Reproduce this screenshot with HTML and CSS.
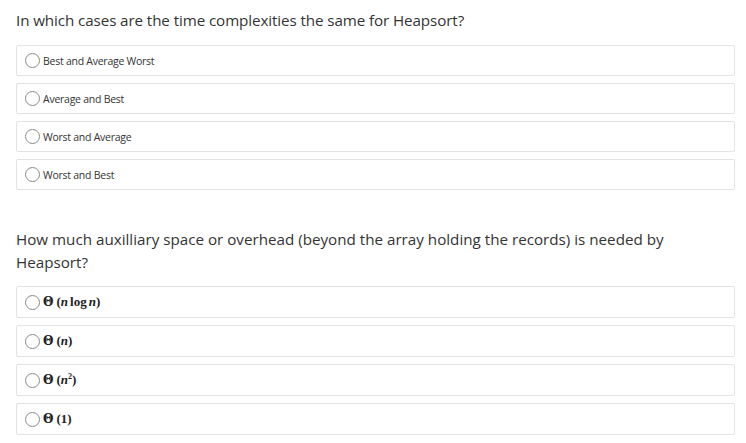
FILE: index.html
```html
<!DOCTYPE html>
<html>
<head>
<meta charset="utf-8">
<link rel="stylesheet" href="styles.css">
</head>
<body>
<div class="page">
  <section class="question q1">
    <p class="prompt">In which cases are the time complexities the same for Heapsort?</p>
    <div class="options">
      <label class="option"><span class="radio"></span><span class="label">Best and Average Worst</span></label>
      <label class="option"><span class="radio"></span><span class="label">Average and Best</span></label>
      <label class="option"><span class="radio"></span><span class="label">Worst and Average</span></label>
      <label class="option"><span class="radio"></span><span class="label">Worst and Best</span></label>
    </div>
  </section>
  <section class="question q2">
    <p class="prompt">How much auxilliary space or overhead (beyond the array holding the records) is needed by Heapsort?</p>
    <div class="options">
      <label class="option"><span class="radio"></span><span class="math"><b>Θ</b><span class="sp"></span>(<i>n</i><span class="op">log</span><i>n</i>)</span></label>
      <label class="option"><span class="radio"></span><span class="math"><b>Θ</b><span class="sp"></span>(<i>n</i>)</span></label>
      <label class="option"><span class="radio"></span><span class="math"><b>Θ</b><span class="sp"></span>(<i>n</i><sup>2</sup>)</span></label>
      <label class="option"><span class="radio"></span><span class="math"><b>Θ</b><span class="sp"></span>(1)</span></label>
    </div>
  </section>
</div>
</body>
</html>
```
FILE: styles.css
```css
html, body {
  margin: 0;
  padding: 0;
  background: #ffffff;
}
.page {
  padding: 9px 11px 0 16px;
  font-family: "Open Sans", "Noto Sans", sans-serif;
  color: #333333;
}
.question {
  display: flex;
  flex-direction: column;
}
.prompt {
  margin: 0;
  font-size: 15.2px;
  line-height: 23px;
  color: #333;
}
.q1 .prompt {
  margin-bottom: 13px;
  letter-spacing: -0.1px;
}
.q2 {
  margin-top: 38px;
}
.q2 .prompt {
  margin-bottom: 12px;
  padding-right: 60px;
}
.options {
  display: flex;
  flex-direction: column;
  gap: 7px;
}
.option {
  display: flex;
  align-items: center;
  height: 29px;
  border: 1px solid #e3e3e3;
  border-radius: 2px;
  padding-left: 8px;
}
.q2 .option {
  height: 30px;
}
.radio {
  border: 1px solid #8a8a8a;
  border-radius: 50%;
  box-sizing: border-box;
  flex: none;
  width: 15px;
  height: 15px;
  margin-right: 3px;
}
.label {
  font-size: 10.5px;
  color: #333;
  letter-spacing: -0.25px;
}
.math {
  font-family: "Liberation Serif", "DejaVu Serif", serif;
  font-size: 13px;
  color: #222;
  font-weight: bold;
}
.math b {
  font-family: "DejaVu Serif", serif;
  font-size: 12px;
  font-weight: bold;
}
.math .sp {
  display: inline-block;
  width: 3px;
}
.math i {
  font-style: italic;
}
.math .op {
  margin: 0 2px;
}
.math sup {
  font-size: 8px;
  vertical-align: 5px;
  line-height: 0;
}
```
